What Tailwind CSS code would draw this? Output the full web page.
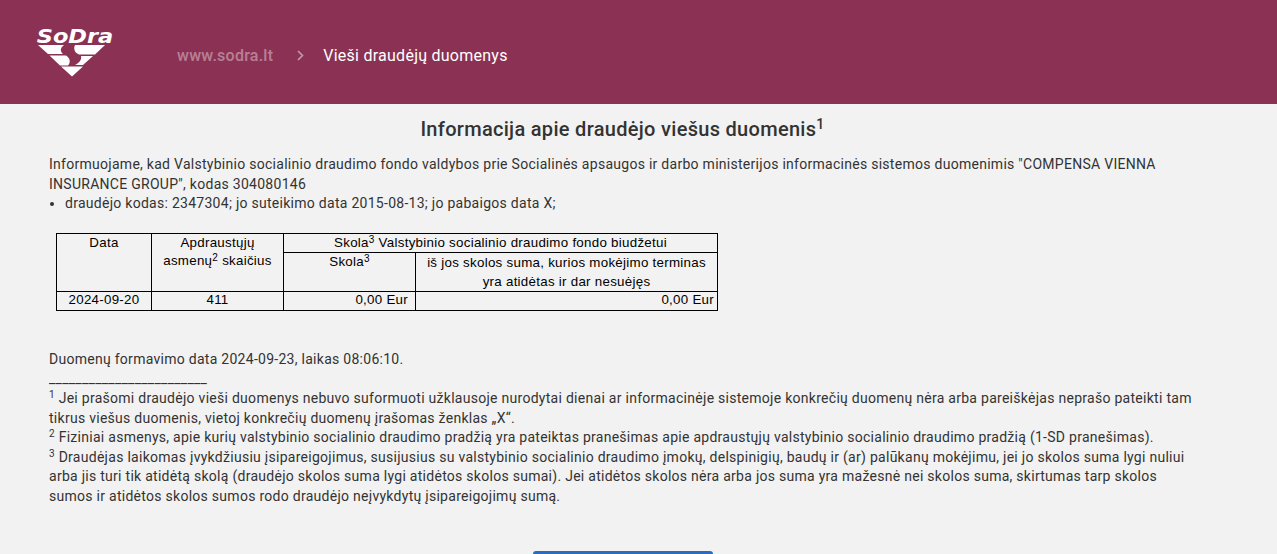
<!DOCTYPE html>
<html>
<head>
<title>Vieši draudėjų duomenys</title>
<script src="https://cdn.jsdelivr.net/npm/@tailwindcss/browser@4"></script>
</head>
<body class="bg-[#f2f2f2] font-['Roboto',sans-serif] text-[14px] leading-[19.6px] tracking-[0.275px] text-[#333] overflow-hidden h-[554px]">

<header class="h-[104px] bg-[#8b3254] flex items-center">
  <div class="w-[177px] pl-[37px] shrink-0">
    <div class="w-[76px] flex flex-col items-center pt-[1px]">
      <span class="font-['DejaVu_Sans',sans-serif] font-bold italic text-[22.5px] leading-[16px] tracking-[0] text-white h-[17px] scale-y-[0.85]">SoDra</span>
      <svg class="-ml-[6px]" width="68" height="32" viewBox="0 0 68 32" fill="#fff">
        <path d="M0 0H26C22 3 22 6 25 9H10Z"/>
        <path d="M11.5 10.5H28C32 13 33 17 30 20.5H22Z"/>
        <path d="M23 21.5H45L34 31.5Z"/>
        <path d="M37 0H67L57 9.5H41C37 8 35 4 37 0Z"/>
        <path d="M43 11H55L45 20H37C41 18 44 15 43 11Z"/>
      </svg>
    </div>
  </div>
  <nav class="flex items-center text-[16px] pt-[7px]">
    <a class="text-white/40 font-medium tracking-[0.25px]">www.sodra.lt</a>
    <svg class="ml-[24px] mr-[19px]" width="7" height="11" viewBox="0 0 7 11" fill="none" stroke="#fff" stroke-opacity="0.5" stroke-width="1.6"><path d="M1 1L5.5 5.5L1 10"/></svg>
    <span class="text-white tracking-[0.25px]">Vieši draudėjų duomenys</span>
  </nav>
</header>

<main class="pl-[49px] pr-[81px] pb-[40px]">
  <h1 class="pt-[11px] text-center text-[20px] leading-[28px] font-medium tracking-[0.3px] text-[#333] pb-[12px]">Informacija apie draudėjo viešus duomenis<sup class="text-[14px] align-baseline relative -top-[7px]">1</sup></h1>

  <p>Informuojame, kad Valstybinio socialinio draudimo fondo valdybos prie Socialinės apsaugos ir darbo ministerijos informacinės sistemos duomenimis "COMPENSA VIENNA INSURANCE GROUP", kodas 304080146</p>
  <ul class="list-disc pl-[16px]">
    <li>draudėjo kodas: 2347304; jo suteikimo data 2015-08-13; jo pabaigos data X;</li>
  </ul>

  <table class="mt-[19px] ml-[7px] border-collapse font-['Liberation_Sans',sans-serif] text-[13.33px] leading-[18px] text-black">
    <tbody>
      <tr>
        <td rowspan="2" class="w-[95px] border border-black text-center align-top">Data</td>
        <td rowspan="2" class="w-[132px] border border-black text-center align-top">Apdraustųjų<br>asmenų<sup class="text-[10px] align-baseline relative -top-[4px]">2</sup> skaičius</td>
        <td colspan="2" class="border border-black text-center align-top">Skola<sup class="text-[10px] align-baseline relative -top-[4px]">3</sup> Valstybinio socialinio draudimo fondo biudžetui</td>
      </tr>
      <tr>
        <td class="w-[132px] border border-black text-center align-top">Skola<sup class="text-[10px] align-baseline relative -top-[4px]">3</sup></td>
        <td class="w-[302px] border border-black text-center align-top"><div class="leading-[19px]">iš jos skolos suma, kurios mokėjimo terminas<br>yra atidėtas ir dar nesuėjęs</div></td>
      </tr>
      <tr>
        <td class="border border-black text-center"><div class="-mt-[1px] pb-[1px]">2024-09-20</div></td>
        <td class="border border-black text-center"><div class="-mt-[1px] pb-[1px]">411</div></td>
        <td class="border border-black text-right pr-[7px]"><div class="-mt-[1px] pb-[1px]">0,00 Eur</div></td>
        <td class="border border-black text-right pr-[3px]"><div class="-mt-[1px] pb-[1px]">0,00 Eur</div></td>
      </tr>
    </tbody>
  </table>

  <p class="mt-[39px]">Duomenų formavimo data 2024-09-23, laikas 08:06:10.</p>
  <p>________________________</p>
  <p><sup class="text-[10px] align-baseline relative -top-[5px]">1</sup> Jei prašomi draudėjo vieši duomenys nebuvo suformuoti užklausoje nurodytai dienai ar informacinėje sistemoje konkrečių duomenų nėra arba pareiškėjas neprašo pateikti tam tikrus viešus duomenis, vietoj konkrečių duomenų įrašomas ženklas „X“.</p>
  <p><sup class="text-[10px] align-baseline relative -top-[5px]">2</sup> Fiziniai asmenys, apie kurių valstybinio socialinio draudimo pradžią yra pateiktas pranešimas apie apdraustųjų valstybinio socialinio draudimo pradžią (1-SD pranešimas).</p>
  <p><sup class="text-[10px] align-baseline relative -top-[5px]">3</sup> Draudėjas laikomas įvykdžiusiu įsipareigojimus, susijusius su valstybinio socialinio draudimo įmokų, delspinigių, baudų ir (ar) palūkanų mokėjimu, jei jo skolos suma lygi nuliui arba jis turi tik atidėtą skolą (draudėjo skolos suma lygi atidėtos skolos sumai). Jei atidėtos skolos nėra arba jos suma yra mažesnė nei skolos suma, skirtumas tarp skolos sumos ir atidėtos skolos sumos rodo draudėjo neįvykdytų įsipareigojimų sumą.</p>

  <div class="mt-[44px] flex justify-center">
    <button class="w-[180px] h-[40px] bg-[#2b6cbf] rounded-[3px]"></button>
  </div>
</main>
</body>
</html>
